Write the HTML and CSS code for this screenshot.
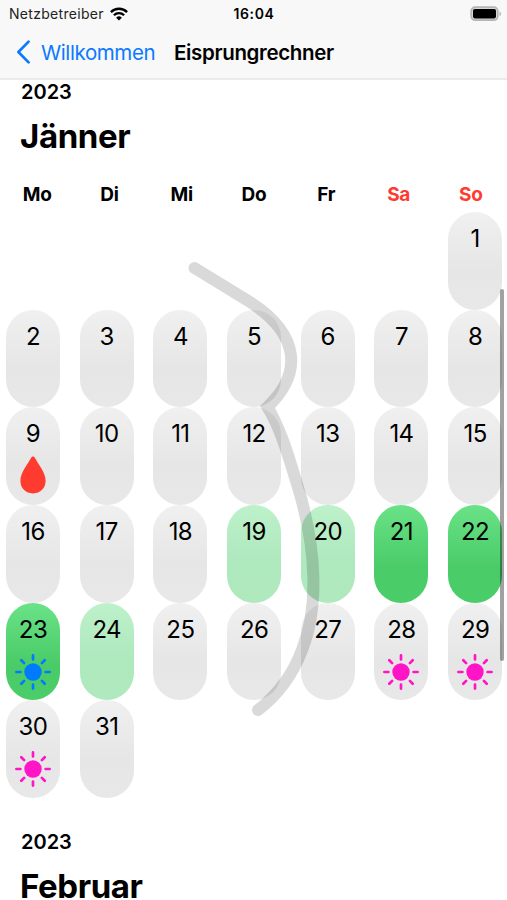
FILE: index.html
```
<!DOCTYPE html>
<html lang="de">
<head>
  <meta charset="UTF-8" />
  <meta name="viewport" content="width=device-width, initial-scale=1.0"/>
  <title>Eisprungrechner</title>
  <link rel="stylesheet" href="styles.css">
</head>
<body>
  <svg class="symbols" width="0" height="0">
    <symbol id="sun" viewBox="0 0 36 36">
      <circle cx="18" cy="18" r="8.7" fill="currentColor"/>
      <path d="M18 1.4v4M18 30.6v4M1.4 18h4M30.6 18h4M6.3 6.3l2.8 2.8M26.9 26.9l2.8 2.8M6.3 29.7l2.8-2.8M26.9 9.1l2.8-2.8" fill="none" stroke="currentColor" stroke-width="2.7" stroke-linecap="round"/>
    </symbol>
    <symbol id="drop" viewBox="0 0 26 38">
      <path d="M13 .6c-.9 0-1.5.5-2 1.5C7.500 8.600.400 17 .400 24.800.400 32.300 5.600 37.400 13 37.400s12.600-5.100 12.600-12.600C25.600 17 18.500 8.600 15 2.100 14.500 1.100 13.900.600 13 .6z" fill="currentColor"/>
    </symbol>
  </svg>

  <header>
    <div class="status">
      <div class="carrier">
        <span>Netzbetreiber</span>
        <svg class="wifi" width="18" height="14" viewBox="0 0 18 14">
          <g fill="none" stroke="#000" stroke-width="2.3">
            <path d="M.9 5.100a11.500 11.500 0 0 1 16.200 0"/>
            <path d="M3.900 8.200a7.200 7.200 0 0 1 10.200 0"/>
          </g>
          <path d="M9 13.600l-2.900-2.900a4.100 4.100 0 0 1 5.800 0z"/>
        </svg>
      </div>
      <div class="time">16:04</div>
      <svg class="battery" width="32" height="16" viewBox="0 0 32 16">
        <rect x="1.200" y="1.200" width="26.600" height="13" rx="4" fill="#d8d8d8" stroke="#b5b5b5" stroke-width="1.700"/>
        <rect x="3" y="3" width="23" height="9.400" rx="1.800"/>
        <path d="M29.500 5.500c1.900.6 1.900 4 0 4.600z" fill="#b0b0b0"/>
      </svg>
    </div>
    <nav>
      <a class="back" href="#">
        <svg width="15" height="24" viewBox="0 0 15 24">
          <path d="M12.600 1.600L2.400 12l10.200 10.400" fill="none" stroke="currentColor" stroke-width="2.700" stroke-linecap="round" stroke-linejoin="round"/>
        </svg>
        <span>Willkommen</span>
      </a>
      <h1>Eisprungrechner</h1>
    </nav>
  </header>

  <main>
    <section>
      <p class="year">2023</p>
      <h2>Jänner</h2>
      <div class="weekdays">
        <span>Mo</span><span>Di</span><span>Mi</span><span>Do</span><span>Fr</span><span class="weekend">Sa</span><span class="weekend">So</span>
      </div>
      <div class="days">
        <div class="day first">1</div>
        <div class="day">2</div>
        <div class="day">3</div>
        <div class="day">4</div>
        <div class="day">5</div>
        <div class="day">6</div>
        <div class="day">7</div>
        <div class="day">8</div>
        <div class="day">9<svg class="drop"><use href="#drop"/></svg></div>
        <div class="day">10</div>
        <div class="day">11</div>
        <div class="day">12</div>
        <div class="day">13</div>
        <div class="day">14</div>
        <div class="day">15</div>
        <div class="day">16</div>
        <div class="day">17</div>
        <div class="day">18</div>
        <div class="day possible">19</div>
        <div class="day possible">20</div>
        <div class="day fertile">21</div>
        <div class="day fertile">22</div>
        <div class="day fertile">23<svg class="sun blue"><use href="#sun"/></svg></div>
        <div class="day possible">24</div>
        <div class="day">25</div>
        <div class="day">26</div>
        <div class="day">27</div>
        <div class="day">28<svg class="sun"><use href="#sun"/></svg></div>
        <div class="day">29<svg class="sun"><use href="#sun"/></svg></div>
        <div class="day">30<svg class="sun"><use href="#sun"/></svg></div>
        <div class="day">31</div>
      </div>
    </section>

    <section class="next">
      <p class="year">2023</p>
      <h2>Februar</h2>
    </section>
  </main>

  <!-- body outline over the calendar -->
  <svg class="figure" width="507" height="900" viewBox="0 0 507 900">
    <path d="M194.500 268L250 302C301 335 302 374 267.500 407C282 431 290 462 297 484C318 552 318 610 302 650C293 674 279 694 258 710"/>
  </svg>
  <div class="scrollbar"></div>
</body>
</html>
```
FILE: styles.css
```
* { box-sizing: border-box; }
body { font-family: Inter, "Liberation Sans", sans-serif; background: #fff; color: #000; margin: 0; height: 900px; overflow: hidden; position: relative; }
h1, h2, p { margin: 0; }
.symbols { display: block; }

header { height: 80px; background: #f8f8f8; border-bottom: 2px solid #ebebeb; }
.status { display: grid; grid-template-columns: 1fr auto 1fr; align-items: center; height: 27px; padding: 0 5px 0 6px; }
.carrier { display: flex; align-items: center; gap: 6px; padding-left: 3px; font-size: 14px; color: #222; letter-spacing: 0.3px; }
.time { font-size: 14px; font-weight: 600; letter-spacing: 0.6px; }
.battery { justify-self: end; }
nav { display: flex; align-items: center; height: 50px; padding-left: 16px; }
.back { display: flex; align-items: center; gap: 10px; color: #0a7aff; text-decoration: none; font-size: 20.5px; letter-spacing: -0.4px; width: 158px; }
h1 { font-size: 20.5px; font-weight: 600; letter-spacing: -0.35px; white-space: nowrap; }

.year { padding-left: 21px; font-size: 20px; font-weight: 600; line-height: 24px; }
h2 { padding-left: 20px; margin-top: 19px; font-size: 33px; font-weight: 700; line-height: 26px; letter-spacing: -0.4px; }
.weekdays { display: grid; grid-template-columns: repeat(7, 1fr); height: 63px; padding: 34px 0 0 1px; text-align: center; font-size: 19px; font-weight: 700; line-height: 24px; letter-spacing: -0.3px; }
.weekend { color: #ff3b30; }
.days { display: grid; grid-template-columns: repeat(7, 54px); grid-auto-rows: 97.7px; column-gap: 19.7px; padding-left: 6px; }
.day { display: flex; flex-direction: column; align-items: center; height: 97.7px; border-radius: 27px; padding-top: 12px; background: linear-gradient(#f0f0f0, #e6e6e6 60%, #e8e8e8); font-size: 24px; line-height: 30px; letter-spacing: -0.6px; }
.first { grid-column: 7; }
.possible { background: linear-gradient(#bdf1ca, #aee8bd 60%, #b0e9be); }
.fertile { background: linear-gradient(#6ae287, #49cb67 65%, #4bcd69); }
.sun { width: 36px; height: 36px; margin-top: 9px; color: #ff14c8; }
.blue { color: #007aff; }
.drop { width: 26px; height: 38px; margin-top: 7px; color: #ff3b30; }
.next { padding-top: 31.5px; }

.figure { position: absolute; top: 0; left: 0; fill: none; stroke: #000; stroke-opacity: 0.15; stroke-width: 12; stroke-linecap: round; }
.scrollbar { position: absolute; top: 289px; left: 500px; width: 4px; height: 372px; border-radius: 2px; background: rgba(0, 0, 0, 0.37); }
```
